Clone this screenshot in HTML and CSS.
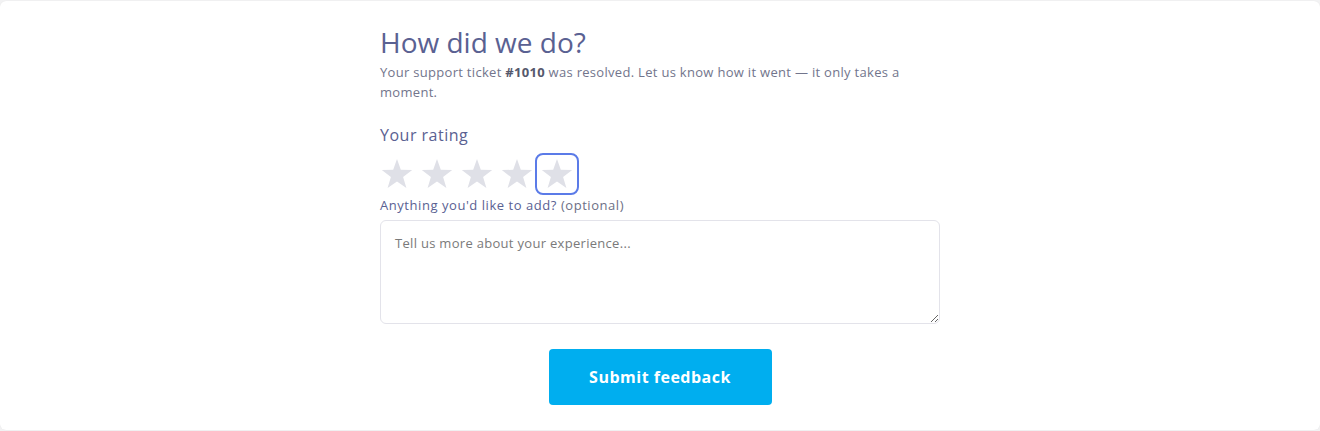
FILE: index.html
```html
<!DOCTYPE html>
<html lang="en">
<head>
    <meta charset="UTF-8">
    <meta name="viewport" content="width=device-width, initial-scale=1.0">
    <title>How did we do?</title>
    <link rel="stylesheet" href="styles.css">
</head>
<body>
    <div class="card">
        <form class="feedback">
            <h1>How did we do?</h1>
            <p class="intro">Your support ticket <strong>#1010</strong> was resolved. Let us know how it went — it only takes a moment.</p>

            <h2>Your rating</h2>
            <div class="stars">
                <button type="button" class="star-btn" aria-label="1 star"><svg viewBox="0 0 32 30"><polygon points="16,0 19.8,10.8 31.2,11 22.1,18.1 25.4,29.1 16,22.6 6.6,29.1 9.9,18.1 0.8,11 12.2,10.8"/></svg></button>
                <button type="button" class="star-btn" aria-label="2 stars"><svg viewBox="0 0 32 30"><polygon points="16,0 19.8,10.8 31.2,11 22.1,18.1 25.4,29.1 16,22.6 6.6,29.1 9.9,18.1 0.8,11 12.2,10.8"/></svg></button>
                <button type="button" class="star-btn" aria-label="3 stars"><svg viewBox="0 0 32 30"><polygon points="16,0 19.8,10.8 31.2,11 22.1,18.1 25.4,29.1 16,22.6 6.6,29.1 9.9,18.1 0.8,11 12.2,10.8"/></svg></button>
                <button type="button" class="star-btn" aria-label="4 stars"><svg viewBox="0 0 32 30"><polygon points="16,0 19.8,10.8 31.2,11 22.1,18.1 25.4,29.1 16,22.6 6.6,29.1 9.9,18.1 0.8,11 12.2,10.8"/></svg></button>
                <button type="button" class="star-btn is-focused" aria-label="5 stars"><svg viewBox="0 0 32 30"><polygon points="16,0 19.8,10.8 31.2,11 22.1,18.1 25.4,29.1 16,22.6 6.6,29.1 9.9,18.1 0.8,11 12.2,10.8"/></svg></button>
            </div>

            <label for="comment" class="comment-label">Anything you'd like to add? <span>(optional)</span></label>
            <textarea id="comment" placeholder="Tell us more about your experience..."></textarea>

            <div class="actions">
                <button type="submit" class="submit-btn">Submit feedback</button>
            </div>
        </form>
    </div>
</body>
</html>
```

FILE: styles.css
```css
body {
    margin: 0;
    background-color: #f2f2f3;
    font-family: "Open Sans", "Noto Sans", sans-serif;
}

.card {
    margin: 1px 0;
    height: 429px;
    box-sizing: border-box;
    background-color: #fff;
    border-radius: 6px;
    box-shadow: 0 0 1px rgba(0, 0, 0, 0.08);
    padding-top: 22px;
}

.feedback {
    width: 560px;
    margin: 0 auto;
}

h1 {
    margin: 0;
    font-size: 28px;
    line-height: 38px;
    font-weight: 500;
    color: #5a6192;
}

.intro {
    margin: 1px 0 0;
    font-size: 13px;
    line-height: 20px;
    letter-spacing: 0.3px;
    color: #72758c;
}

.intro strong {
    color: #55586c;
    font-weight: 700;
}

h2 {
    margin: 21px 0 0;
    font-size: 16px;
    line-height: 24px;
    font-weight: 500;
    letter-spacing: 0.5px;
    color: #5a6192;
}

.stars {
    display: flex;
    margin: 8px 0 0 -3px;
}

.star-btn {
    width: 40px;
    height: 38px;
    padding: 0;
    border: none;
    background: none;
    border-radius: 6px;
    cursor: pointer;
    display: flex;
    align-items: center;
    justify-content: center;
}

.star-btn svg {
    width: 32px;
    height: 30px;
    fill: #dfe0e7;
}

.star-btn.is-focused {
    outline: 2px solid #5b7be8;
}

.comment-label {
    display: block;
    margin-top: 2px;
    font-size: 13px;
    line-height: 20px;
    font-weight: 500;
    letter-spacing: 0.55px;
    color: #5a6192;
}

.comment-label span {
    font-weight: 400;
    color: #6c6f85;
}

textarea {
    display: block;
    width: 100%;
    height: 104px;
    box-sizing: border-box;
    margin-top: 5px;
    padding: 12px 14px;
    border: 1px solid #e3e3ea;
    border-radius: 6px;
    font-family: inherit;
    font-size: 13px;
    line-height: 20px;
    letter-spacing: 0.3px;
    color: #444;
}

textarea::placeholder {
    color: #7a7a7a;
}

.actions {
    display: flex;
    justify-content: center;
    margin-top: 25px;
}

.submit-btn {
    width: 223px;
    height: 56px;
    border: none;
    border-radius: 4px;
    background-color: #00aeef;
    color: #fff;
    font-family: inherit;
    font-size: 16px;
    font-weight: 700;
    letter-spacing: 0.5px;
    cursor: pointer;
}
```
